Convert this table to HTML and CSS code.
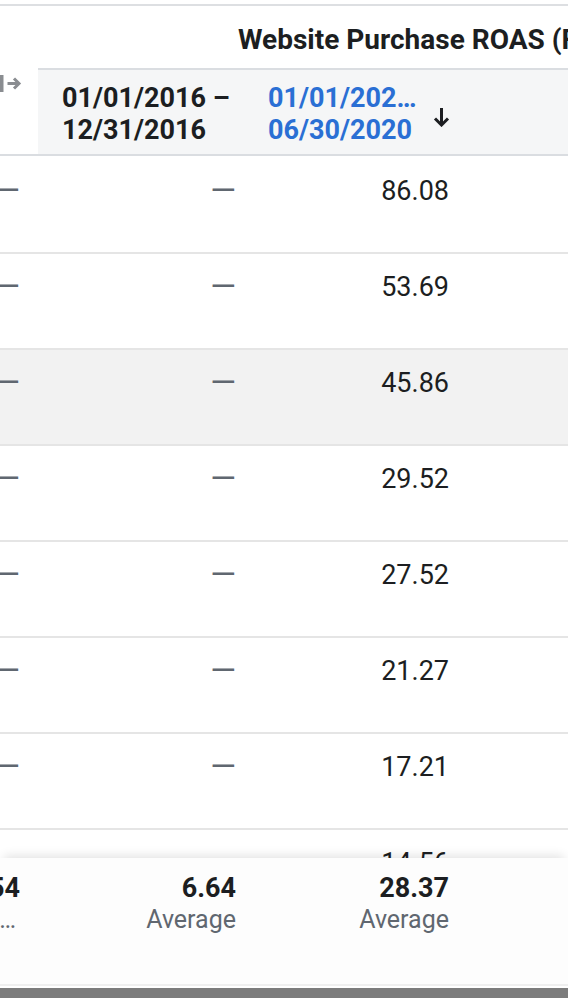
FILE: index.html
```html
<!DOCTYPE html>
<html lang="en">
<head>
    <meta charset="UTF-8">
    <meta name="viewport" content="width=device-width, initial-scale=1.0">
    <title>Ads Report</title>
    <link rel="stylesheet" href="styles.css">
</head>
<body>
    <div class="report">
        <div class="table">
            <div class="group-row">
                <div class="group-title">Website Purchase ROAS (Facebook Pixel)</div>
            </div>

            <div class="row head-row">
                <div class="cell c0 expand">
                    <svg width="22" height="18" viewBox="0 0 22 18">
                        <rect x="0" y="0" width="3.5" height="17" fill="#8a8d91"/>
                        <path d="M7.5 8.5h12M14 3.5l5 5-5 5" stroke="#8a8d91" stroke-width="3" fill="none"/>
                    </svg>
                </div>
                <div class="cell c1 head">01/01/2016 –<br>12/31/2016</div>
                <div class="cell c2 head sorted">
                    <div class="range">
                        <span class="clip">01/01/2020 –</span>
                        <span>06/30/2020</span>
                    </div>
                    <svg class="sort-arrow" width="17" height="20" viewBox="0 0 17 20">
                        <path d="M8.5 1v17M2 11.5l6.5 6.5 6.5-6.5" stroke="#1c1e21" stroke-width="3" fill="none"/>
                    </svg>
                </div>
                <div class="cell c3 head"></div>
            </div>

            <div class="row">
                <div class="cell c0 empty">—</div>
                <div class="cell c1 empty">—</div>
                <div class="cell c2">86.08</div>
                <div class="cell c3"></div>
            </div>
            <div class="row">
                <div class="cell c0 empty">—</div>
                <div class="cell c1 empty">—</div>
                <div class="cell c2">53.69</div>
                <div class="cell c3"></div>
            </div>
            <div class="row hover">
                <div class="cell c0 empty">—</div>
                <div class="cell c1 empty">—</div>
                <div class="cell c2">45.86</div>
                <div class="cell c3"></div>
            </div>
            <div class="row">
                <div class="cell c0 empty">—</div>
                <div class="cell c1 empty">—</div>
                <div class="cell c2">29.52</div>
                <div class="cell c3"></div>
            </div>
            <div class="row">
                <div class="cell c0 empty">—</div>
                <div class="cell c1 empty">—</div>
                <div class="cell c2">27.52</div>
                <div class="cell c3"></div>
            </div>
            <div class="row">
                <div class="cell c0 empty">—</div>
                <div class="cell c1 empty">—</div>
                <div class="cell c2">21.27</div>
                <div class="cell c3"></div>
            </div>
            <div class="row">
                <div class="cell c0 empty">—</div>
                <div class="cell c1 empty">—</div>
                <div class="cell c2">17.21</div>
                <div class="cell c3"></div>
            </div>
            <div class="row">
                <div class="cell c0 empty">—</div>
                <div class="cell c1 empty">—</div>
                <div class="cell c2">14.56</div>
                <div class="cell c3"></div>
            </div>
        </div>

        <div class="summary">
            <div class="cell c0 total">
                <b>1,254</b>
                <span class="more">…</span>
            </div>
            <div class="cell c1 total">
                <b>6.64</b>
                <span>Average</span>
            </div>
            <div class="cell c2 total">
                <b>28.37</b>
                <span>Average</span>
            </div>
            <div class="cell c3"></div>
        </div>
        <div class="scrollbar"></div>
    </div>
</body>
</html>
```

FILE: styles.css
```css
body {
    margin: 0;
    font-family: 'Roboto', 'Liberation Sans', sans-serif;
    color: #1c1e21;
    background: #ffffff;
    overflow: hidden;
}
.report {
    height: 100vh;
    display: flex;
    flex-direction: column;
}
.table {
    flex: 1;
    overflow: hidden;
    border-top: 2px solid #dddfe2;
    margin-top: 4px;
}
.group-row {
    height: 62px;
    padding-left: 238px;
    padding-top: 17px;
    box-sizing: border-box;
    white-space: nowrap;
    overflow: hidden;
}
.group-title {
    font-size: 28px;
    font-weight: bold;
    line-height: 34px;
}
.row {
    display: flex;
    height: 96px;
    box-sizing: border-box;
    border-bottom: 2px solid #e5e5e5;
    font-size: 27px;
    line-height: 32px;
}
.row.hover {
    background-color: #f2f2f2;
}
.cell {
    box-sizing: border-box;
    display: flex;
    justify-content: flex-end;
    padding-top: 17px;
    overflow: hidden;
    white-space: nowrap;
}
.c0 { width: 38px; padding-right: 18px; }
.c1 { width: 212px; padding-right: 14px; }
.c2 { width: 214px; padding-right: 15px; }
.c3 { flex: 1; }
.empty {
    color: #606770;
    font-size: 33px;
}
.head-row {
    height: 88px;
    border-bottom: 2px solid #dadde1;
    font-weight: bold;
}
.head-row .cell {
    padding-top: 4px;
}
.head {
    background-color: #f5f6f7;
    border-top: 2px solid #dadde1;
    justify-content: flex-start;
    align-items: center;
}
.expand {
    align-items: flex-start;
    justify-content: flex-start;
    padding-top: 7px !important;
    padding-right: 0;
}
.c1.head {
    padding-left: 24px;
}
.sorted {
    padding-left: 18px;
    padding-right: 14px;
    color: #2a6fd4;
}
.range {
    display: flex;
    flex-direction: column;
}
.clip {
    width: 154px;
    overflow: hidden;
    text-overflow: ellipsis;
}
.sort-arrow {
    margin-left: auto;
    margin-top: 6px;
}
.row:nth-child(3) {
    height: 98px;
}
.row:nth-child(3) .cell {
    padding-top: 19px;
}
.summary {
    position: relative;
    display: flex;
    height: 126px;
    margin-top: -20px;
    background-color: #fdfdfd;
    border-bottom: 2px solid #efefef;
    box-shadow: 0 -6px 10px -4px rgba(0, 0, 0, 0.12);
}
.total {
    flex-direction: column;
    justify-content: flex-start;
    align-items: flex-end;
    padding-top: 15px;
}
.total b {
    font-size: 27px;
    line-height: 30px;
}
.total span {
    font-size: 25px;
    line-height: 30px;
    margin-top: 2px;
    color: #606770;
}
.total .more {
    margin-right: 4px;
}
.scrollbar {
    height: 10px;
    margin-top: 2px;
    background-color: #7c7c7c;
}
```
